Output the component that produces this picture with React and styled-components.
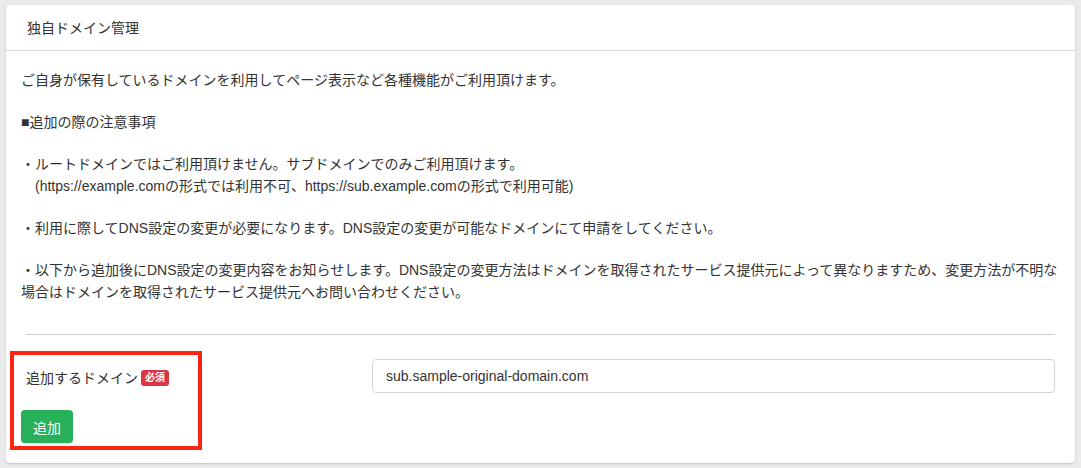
import React from "react";
import styled, { createGlobalStyle } from "styled-components";

const GlobalStyle = createGlobalStyle`
  html, body {
    margin: 0;
    padding: 0;
    background: #e9eaec;
  }
  body {
    font-family: "Liberation Sans", "Noto Sans CJK JP", sans-serif;
    font-size: 14px;
    color: #333;
  }
  * {
    box-sizing: border-box;
  }
`;

const Page = styled.div`
  padding: 5px 6px;
`;

const Card = styled.section`
  position: relative;
  background: #fff;
  border-radius: 4px;
  box-shadow: 0 1px 2px rgba(0, 0, 0, 0.18);
`;

const CardHeader = styled.header`
  display: flex;
  align-items: center;
  height: 46px;
  padding: 0 21px;
  border-bottom: 1px solid #d9d8e0;
  line-height: 22px;
`;

const CardBody = styled.div`
  padding: 18px 15px 20px;
`;

const Note = styled.p`
  margin: 0 0 20px;
  line-height: 22px;

  &:last-of-type {
    margin-bottom: 0;
  }
`;

const Indented = styled.span`
  display: block;
  padding-left: 1em;
`;

const Divider = styled.hr`
  margin: 31px 5px 0;
  border: 0;
  border-top: 1px solid #cfcfd2;
  height: 0;
`;

const FormRow = styled.div`
  display: grid;
  grid-template-columns: 346px 1fr;
  align-items: center;
  margin-top: 24px;
  padding: 0 5px;
`;

const Label = styled.label`
  display: flex;
  align-items: center;
  gap: 3px;
  padding-top: 4px;
  line-height: 22px;
`;

const Badge = styled.span`
  display: inline-flex;
  align-items: center;
  height: 16px;
  padding: 0 4px;
  border-radius: 3px;
  background: #dc3545;
  color: #fff;
  font-size: 10px;
  font-weight: bold;
`;

const Input = styled.input`
  width: 100%;
  height: 34px;
  padding: 0 13px;
  border: 1px solid #d3d4d8;
  border-radius: 4px;
  font-family: inherit;
  font-size: 14px;
  color: #333;
  background: #fff;
  outline: none;
`;

const SubmitButton = styled.button`
  display: block;
  height: 33px;
  margin-top: 17px;
  padding: 0 12px;
  border: none;
  border-radius: 4px;
  background: #28b05a;
  color: #fff;
  font-family: inherit;
  font-size: 14px;
  cursor: pointer;
  box-shadow: 0 1px 1px rgba(0, 0, 0, 0.1);
`;

const Highlight = styled.div`
  position: absolute;
  left: 4px;
  top: 346px;
  width: 192px;
  height: 99px;
  border: 4px solid #fe2412;
  pointer-events: none;
`;

const App = () => {
  return (
    <Page>
      <GlobalStyle />
      <Card>
        <CardHeader>独自ドメイン管理</CardHeader>
        <CardBody>
          <Note>
            ご自身が保有しているドメインを利用してページ表示など各種機能がご利用頂けます。
          </Note>
          <Note>■追加の際の注意事項</Note>
          <Note>
            ・ルートドメインではご利用頂けません。サブドメインでのみご利用頂けます。
            <Indented>
              (https://example.comの形式では利用不可、https://sub.example.comの形式で利用可能)
            </Indented>
          </Note>
          <Note>
            ・利用に際してDNS設定の変更が必要になります。DNS設定の変更が可能なドメインにて申請をしてください。
          </Note>
          <Note>
            ・以下から追加後にDNS設定の変更内容をお知らせします。DNS設定の変更方法はドメインを取得されたサービス提供元によって異なりますため、変更方法が不明な
            <br />
            場合はドメインを取得されたサービス提供元へお問い合わせください。
          </Note>
          <Divider />
          <FormRow>
            <Label>
              追加するドメイン<Badge>必須</Badge>
            </Label>
            <Input defaultValue="sub.sample-original-domain.com" />
          </FormRow>
          <SubmitButton>追加</SubmitButton>
        </CardBody>
        <Highlight />
      </Card>
    </Page>
  );
};

export default App;
